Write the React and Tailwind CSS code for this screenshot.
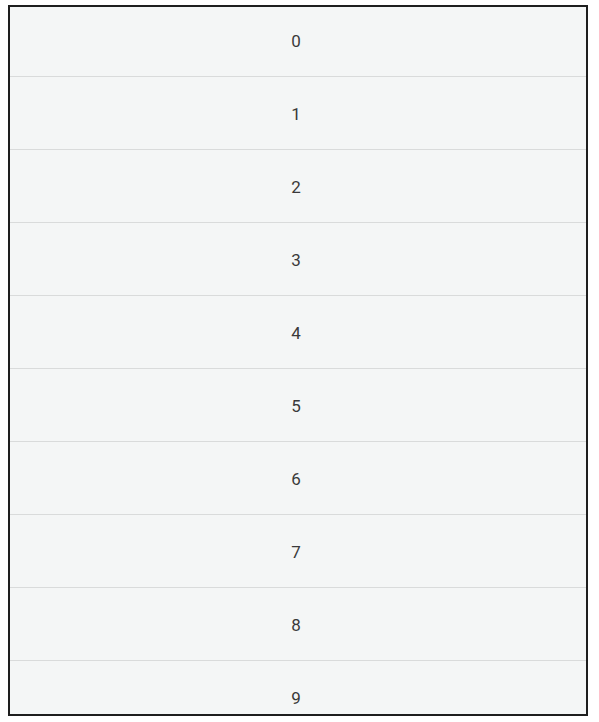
const rows = Array.from({ length: 10 }, (_, i) => i);

export default function App() {
  return (
    <div className="w-[599px] h-[722px] bg-white pt-[5px] pl-[8px]" style={{ fontFamily: 'Roboto, "Liberation Sans", sans-serif' }}>
      <div className="w-[580px] h-[711px] border-2 border-[#1e1e1e] bg-[#f4f6f6] overflow-hidden">
        <div className="-mt-[3px]">
          {rows.map(n => (
            <div
              key={n}
              className="h-[73px] flex items-center justify-center pt-[3px] pr-[4px] border-b border-[#d9dbdb] text-[17px] text-[#3a3a3a]"
            >
              {n}
            </div>
          ))}
        </div>
      </div>
    </div>
  );
}
